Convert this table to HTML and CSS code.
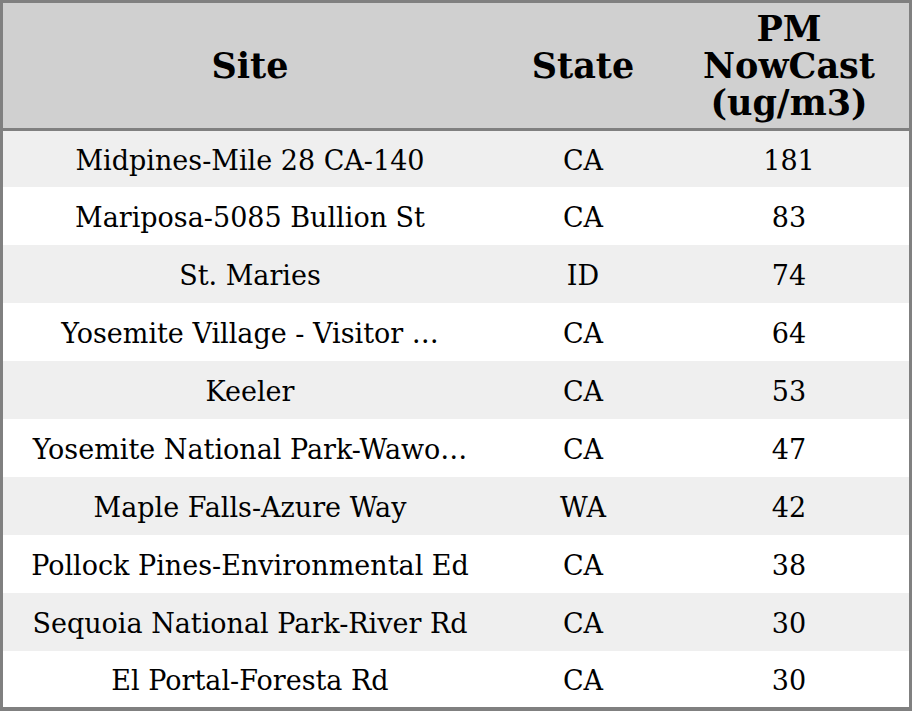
FILE: index.html
```html
<!DOCTYPE html>
<html>
<head>
<meta charset="utf-8">
<link rel="stylesheet" href="styles.css">
</head>
<body>
<table class="aq">
  <colgroup><col class="c-site"><col class="c-state"><col class="c-pm"></colgroup>
  <thead>
    <tr><th>Site</th><th>State</th><th>PM<br>NowCast<br>(ug/m3)</th></tr>
  </thead>
  <tbody>
    <tr><td>Midpines-Mile 28 CA-140</td><td>CA</td><td>181</td></tr>
    <tr><td>Mariposa-5085 Bullion St</td><td>CA</td><td>83</td></tr>
    <tr><td>St. Maries</td><td>ID</td><td>74</td></tr>
    <tr><td>Yosemite Village - Visitor …</td><td>CA</td><td>64</td></tr>
    <tr><td>Keeler</td><td>CA</td><td>53</td></tr>
    <tr><td>Yosemite National Park-Wawo…</td><td>CA</td><td>47</td></tr>
    <tr><td>Maple Falls-Azure Way</td><td>WA</td><td>42</td></tr>
    <tr><td>Pollock Pines-Environmental Ed</td><td>CA</td><td>38</td></tr>
    <tr><td>Sequoia National Park-River Rd</td><td>CA</td><td>30</td></tr>
    <tr><td>El Portal-Foresta Rd</td><td>CA</td><td>30</td></tr>
  </tbody>
</table>
</body>
</html>
```
FILE: styles.css
```css
html, body {
  margin: 0;
  padding: 0;
  background: #ffffff;
}
.aq {
  width: 912px;
  border-collapse: separate;
  border-spacing: 0;
  border-style: solid;
  border-color: #808080;
  border-width: 3px 3px 4px 3px;
  table-layout: fixed;
  font-family: "DejaVu Serif", serif;
  color: #000;
}
.c-site { width: 494px; }
.c-state { width: 172px; }
.c-pm { width: 240px; }
.aq th {
  background: #d0d0d0;
  font-weight: bold;
  font-size: 35px;
  line-height: 37px;
  height: 125px;
  padding: 0;
  text-align: center;
  vertical-align: middle;
  border-bottom: 3px solid #808080;
}
.aq td {
  font-size: 27px;
  line-height: 32px;
  height: 55px;
  padding: 3px 0 0 0;
  text-align: center;
  vertical-align: middle;
  white-space: nowrap;
}
.aq tbody tr:first-child td,
.aq tbody tr:last-child td {
  height: 53px;
}
.aq tbody tr:nth-child(odd) td {
  background: #efefef;
}
```
